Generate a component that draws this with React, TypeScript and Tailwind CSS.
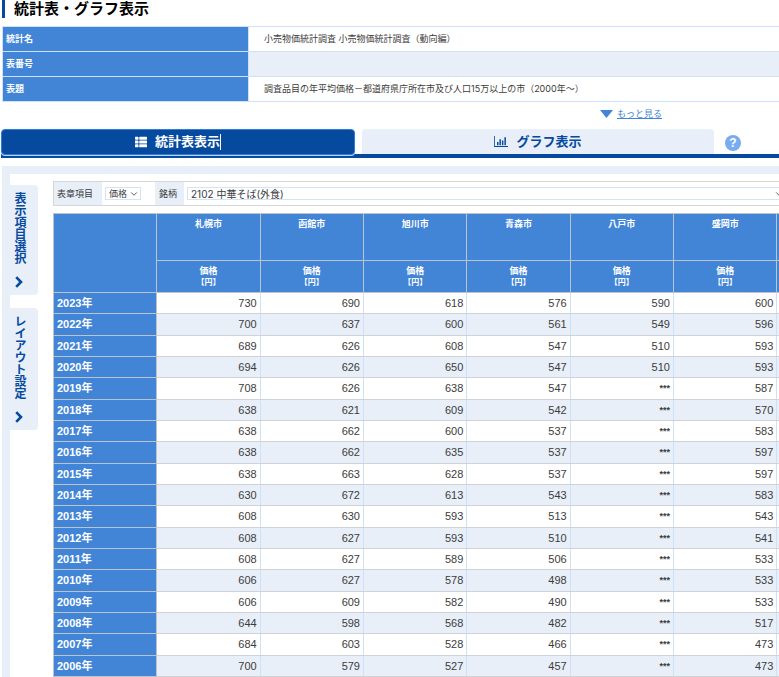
import { useState } from "react";
import { ChevronDown } from "lucide-react";
import { FaThList } from "react-icons/fa";

const summary = [
  { label: "統計名", value: "小売物価統計調査 小売物価統計調査（動向編）" },
  { label: "表番号", value: "" },
  { label: "表題", value: "調査品目の年平均価格－都道府県庁所在市及び人口15万以上の市（2000年～）" },
];

const cities = ["札幌市", "函館市", "旭川市", "青森市", "八戸市", "盛岡市"];

const rows = [
  { year: "2023年", values: ["730", "690", "618", "576", "590", "600"] },
  { year: "2022年", values: ["700", "637", "600", "561", "549", "596"] },
  { year: "2021年", values: ["689", "626", "608", "547", "510", "593"] },
  { year: "2020年", values: ["694", "626", "650", "547", "510", "593"] },
  { year: "2019年", values: ["708", "626", "638", "547", "***", "587"] },
  { year: "2018年", values: ["638", "621", "609", "542", "***", "570"] },
  { year: "2017年", values: ["638", "662", "600", "537", "***", "583"] },
  { year: "2016年", values: ["638", "662", "635", "537", "***", "597"] },
  { year: "2015年", values: ["638", "663", "628", "537", "***", "597"] },
  { year: "2014年", values: ["630", "672", "613", "543", "***", "583"] },
  { year: "2013年", values: ["608", "630", "593", "513", "***", "543"] },
  { year: "2012年", values: ["608", "627", "593", "510", "***", "541"] },
  { year: "2011年", values: ["608", "627", "589", "506", "***", "533"] },
  { year: "2010年", values: ["606", "627", "578", "498", "***", "533"] },
  { year: "2009年", values: ["606", "609", "582", "490", "***", "533"] },
  { year: "2008年", values: ["644", "598", "568", "482", "***", "517"] },
  { year: "2007年", values: ["684", "603", "528", "466", "***", "473"] },
  { year: "2006年", values: ["700", "579", "527", "457", "***", "473"] },
];

const ChartIcon = () => (
  <svg viewBox="0 0 14 11" className="h-[11px] w-3.5" fill="currentColor">
    <path d="M0 0h.8v10.1H14v.9H0z" />
    <path d="M3 6h1.5v3.2H3zM5.4 3.2h1.5v6H5.4zM7.9 4.6h1.5v4.6H7.9zM10.4 1.2h1.5v8h-1.5z" />
  </svg>
);

const ArrowIcon = () => (
  <svg viewBox="0 0 8 12" className="h-3 w-2" fill="none" stroke="currentColor" strokeWidth="2.6">
    <path d="M1.2 1.2 6 6l-4.8 4.8" />
  </svg>
);

const SideTab = ({ label }: { label: string }) => (
  <button className="flex w-7 flex-col items-center gap-3 rounded-r bg-[#e8eff8] pt-[7px] pr-2.5 pb-[7px] text-xs leading-5 font-bold text-[#064a9f]">
    <span className="[writing-mode:vertical-rl]">{label}</span>
    <ArrowIcon />
  </button>
);

const SummaryTable = () => (
  <table className="mt-2 ml-0.5 w-full border-collapse text-[9px] leading-3">
    <tbody>
      {summary.map((item) => (
        <tr key={item.label} className="h-[25px] even:bg-[#e8eff8]">
          <th
            scope="row"
            className="w-[246px] border border-[#cfe1f7] bg-[#4285d7] px-[3px] text-left font-bold text-white"
          >
            {item.label}
          </th>
          <td className="border border-[#cfe1f7] px-[15px] font-[Inter,'Noto_Sans_CJK_JP',sans-serif]">
            {item.value}
          </td>
        </tr>
      ))}
    </tbody>
  </table>
);

const Filters = () => {
  const [item, setItem] = useState("price");
  const [brand, setBrand] = useState("2102");

  return (
    <div className="-mr-2 flex h-[25px] items-stretch border border-[#d6d6d6] text-[9px] leading-3">
      <label htmlFor="item" className="flex w-12 items-center bg-[#e8eff8] pl-[3px]">
        表章項目
      </label>
      <div className="relative mr-[14px] ml-[3px] flex items-center">
        <select
          id="item"
          value={item}
          onChange={(e) => setItem(e.target.value)}
          className="h-[13px] w-9 appearance-none border border-[#d3e4f8] bg-white pl-[3px]"
        >
          <option value="price">価格</option>
        </select>
        <ChevronDown className="pointer-events-none absolute right-0.5 h-2.5 w-2.5" />
      </div>
      <label htmlFor="brand" className="flex w-[29px] items-center bg-[#e8eff8] pl-1">
        銘柄
      </label>
      <div className="relative ml-[3px] flex flex-1 items-center">
        <select
          id="brand"
          value={brand}
          onChange={(e) => setBrand(e.target.value)}
          className="h-[13px] w-full appearance-none border border-[#d3e4f8] bg-white pl-[3px] font-[Inter,'Noto_Sans_CJK_JP',sans-serif] text-[10px]"
        >
          <option value="2102">2102 中華そば(外食)</option>
        </select>
        <ChevronDown className="pointer-events-none absolute right-0.5 h-2.5 w-2.5" />
      </div>
    </div>
  );
};

const PriceTable = () => (
  <table className="mt-[7px] h-[464px] w-[114%] table-fixed border-collapse text-[11px] leading-4">
    <thead className="bg-[#4285d7] text-[9px] leading-3 text-white">
      <tr className="h-[47px]">
        <td rowSpan={2} className="border border-[#b9c4d0]" />
        {cities.map((city) => (
          <th key={city} scope="col" className="border border-[#b9c4d0] pt-1 align-top font-bold">
            {city}
          </th>
        ))}
        <td className="border border-[#b9c4d0]" />
      </tr>
      <tr className="h-8">
        {cities.map((city) => (
          <th key={city} scope="col" className="border border-[#b9c4d0] font-bold">
            価格
            <span className="block text-[8px]">【円】</span>
          </th>
        ))}
        <td className="border border-[#b9c4d0]" />
      </tr>
    </thead>
    <tbody>
      {rows.map((row) => (
        <tr key={row.year} className="even:bg-[#e8eff8]">
          <th
            scope="row"
            className="border border-[#b9c4d0] bg-[#4285d7] pl-[3px] text-left font-bold text-white"
          >
            {row.year}
          </th>
          {row.values.map((value, i) => (
            <td
              key={cities[i]}
              className="border-x border-y border-x-[#cfe1f7] border-y-[#cfd2d6] pr-[3px] text-right"
            >
              {value === "***" ? (
                <span className="block text-[9px] leading-4 font-bold">***</span>
              ) : (
                value
              )}
            </td>
          ))}
          <td className="border-y border-y-[#cfd2d6]" />
        </tr>
      ))}
    </tbody>
  </table>
);

const App = () => {
  const [tab, setTab] = useState("table");

  return (
    <main className="overflow-hidden bg-white font-['Liberation_Sans','Noto_Sans_CJK_JP',sans-serif] text-[#3c3c3c]">
      <h1 className="ml-0.5 h-[18px] border-l-[3px] border-[#064a9f] pl-[9px] text-[15px] leading-[18px] font-bold text-black">
        統計表・グラフ表示
      </h1>

      <SummaryTable />

      <div className="mb-1 flex h-[23px] items-center justify-end gap-1 pr-[117px] text-[9px] leading-3 text-[#4285d7]">
        <svg viewBox="0 0 13 8" className="h-2 w-[13px]" fill="currentColor">
          <path d="M0 0h13L6.5 8z" />
        </svg>
        <a href="#more" className="underline">
          もっと見る
        </a>
      </div>

      <div className="ml-px flex h-[29px] border-b-4 border-[#064a9f] pr-[38px]">
        <div className="flex flex-1 gap-[7px] text-[13px] leading-4 font-bold">
          <button
            onClick={() => setTab("table")}
            aria-pressed={tab === "table"}
            className="-mb-px flex flex-1 items-center justify-center gap-2 rounded border border-[#2f7be0] bg-[#064a9f] text-white shadow-[0_1px_0_#b8d4f5]"
          >
            <FaThList className="h-3 w-3" />
            <span className="border-r border-white">統計表表示</span>
          </button>
          <button
            onClick={() => setTab("chart")}
            aria-pressed={tab === "chart"}
            className="flex flex-1 items-center justify-center gap-2 rounded-t bg-[#e8eff8] text-[#064a9f]"
          >
            <ChartIcon />
            グラフ表示
          </button>
        </div>
        <button className="mt-1.5 ml-[11px] h-4 w-4 rounded-full bg-[#77adf0] text-center text-xs leading-4 font-bold text-white">
          ?
        </button>
      </div>

      <section className="mt-2 ml-0.5 flex border-t-8 border-l-8 border-[#e8eff8]">
        <div className="mt-[11px] flex w-[43px] shrink-0 flex-col items-start gap-[13px]">
          <SideTab label="表示項目選択" />
          <SideTab label="レイアウト設定" />
        </div>
        <div className="mt-[7px] min-w-0 flex-1">
          <Filters />
          <PriceTable />
        </div>
      </section>
    </main>
  );
};

export default App;
